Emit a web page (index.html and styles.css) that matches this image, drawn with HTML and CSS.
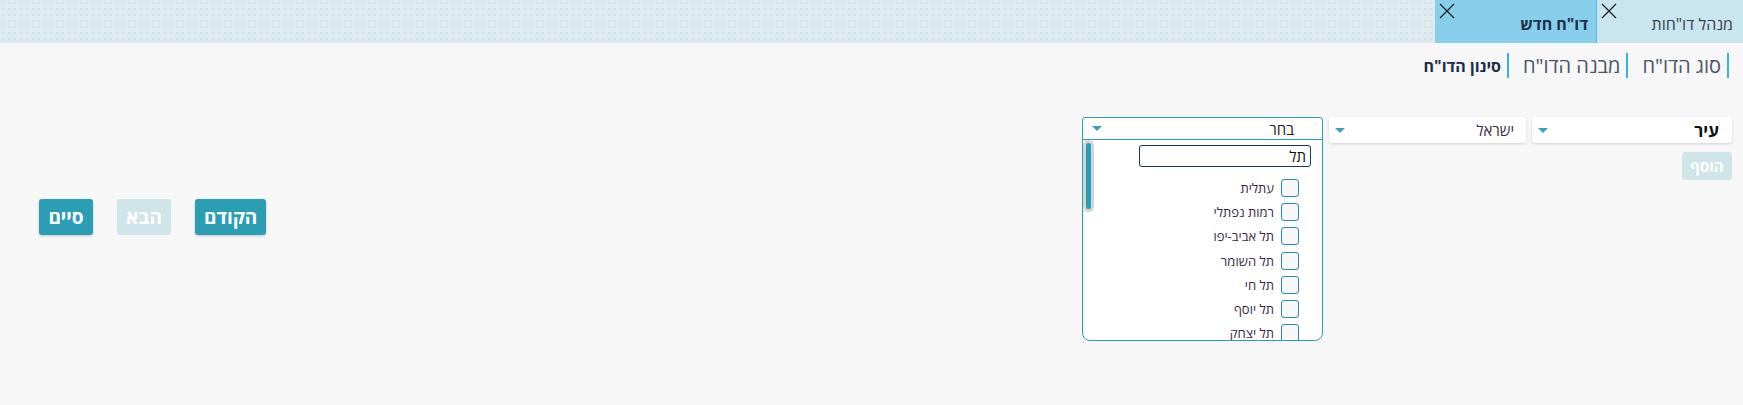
FILE: index.html
```html
<!DOCTYPE html>
<html lang="he" dir="rtl">
<head>
    <meta charset="UTF-8">
    <meta name="viewport" content="width=device-width, initial-scale=1.0">
    <title>דו"ח חדש</title>
    <link rel="stylesheet" href="styles.css">
</head>
<body>
    <div class="topbar">
        <div class="tab">
            <span class="tab-title">מנהל דו"חות</span>
            <span class="tab-close">
                <svg width="16" height="16" viewBox="0 0 16 16"><path d="M1 1L15 15M15 1L1 15" stroke="#222" stroke-width="1.3" fill="none"/></svg>
            </span>
        </div>
        <div class="tab active">
            <span class="tab-title">דו"ח חדש</span>
            <span class="tab-close">
                <svg width="16" height="16" viewBox="0 0 16 16"><path d="M1 1L15 15M15 1L1 15" stroke="#222" stroke-width="1.3" fill="none"/></svg>
            </span>
        </div>
    </div>

    <div class="steps">
        <span class="step">סוג הדו"ח</span>
        <span class="step">מבנה הדו"ח</span>
        <span class="step current">סינון הדו"ח</span>
    </div>

    <div class="content">
        <div class="filter">
            <div class="selects">
                <div class="select field">
                    <span>עיר</span>
                    <span class="arrow"></span>
                </div>
                <div class="select">
                    <span>ישראל</span>
                    <span class="arrow"></span>
                </div>
                <div class="select open">
                    <div class="dropdown">
                        <div class="dd-head">
                            <span>בחר</span>
                            <span class="arrow"></span>
                        </div>
                        <div class="dd-body">
                            <input class="dd-search" type="text" value="תל">
                            <ul class="dd-list">
                                <li><span class="check"></span><span>עתלית</span></li>
                                <li><span class="check"></span><span>רמות נפתלי</span></li>
                                <li><span class="check"></span><span>תל אביב-יפו</span></li>
                                <li><span class="check"></span><span>תל השומר</span></li>
                                <li><span class="check"></span><span>תל חי</span></li>
                                <li><span class="check"></span><span>תל יוסף</span></li>
                                <li><span class="check"></span><span>תל יצחק</span></li>
                            </ul>
                            <div class="scrollbar"><div class="thumb"></div></div>
                        </div>
                    </div>
                </div>
            </div>
            <div class="add-row">
                <button class="btn small disabled">הוסף</button>
            </div>
        </div>

        <div class="nav">
            <button class="btn">הקודם</button>
            <button class="btn disabled">הבא</button>
            <button class="btn">סיים</button>
        </div>
    </div>
</body>
</html>
```

FILE: styles.css
```css
html, body {
    min-height: 100vh;
}
body {
    margin: 0;
    background: #f7f7f7;
    font-family: "Open Sans", "Liberation Sans", sans-serif;
    color: #2b2b3a;
}
.topbar {
    display: flex;
    height: 43px;
    background-color: #deebee;
    background-image: radial-gradient(#cde1e5 1px, transparent 1.2px);
    background-size: 6px 6px;
}
.tab {
    display: flex;
    width: 146px;
    padding-right: 10px;
    box-sizing: border-box;
    background: #c8e5f0;
}
.tab.active {
    width: 162px;
    padding-right: 8px;
    background: #87ceeb;
    border-right: 1px solid #5ab4d6;
}
.tab-title {
    align-self: center;
    margin-top: 5px;
    font-size: 16px;
    color: #3a3f4a;
    white-space: nowrap;
}
.tab.active .tab-title {
    font-weight: bold;
    color: #1c2e4a;
}
.tab-close {
    margin-right: auto;
    padding: 2px 4px 0 0;
    width: 20px;
    height: 20px;
}
.steps {
    display: flex;
    margin-top: 10px;
    padding-right: 14px;
}
.step {
    display: flex;
    align-items: center;
    height: 25px;
    padding-right: 6px;
    margin-left: 14px;
    border-right: 2px solid #35b5dd;
    font-size: 20px;
    color: #4a5566;
    white-space: nowrap;
}
.step.current {
    font-size: 16px;
    font-weight: bold;
    color: #1c2e4a;
}
.content {
    padding: 39px 11px 0 39px;
}
.selects {
    display: flex;
    gap: 6px;
}
.select {
    display: flex;
    align-items: center;
    width: 197px;
    height: 26px;
    padding: 0 12px 0 6px;
    box-sizing: border-box;
    background: white;
    border-radius: 3px;
    box-shadow: 0 1px 3px rgba(0, 0, 0, 0.15);
    font-size: 15px;
    color: #3a2a4a;
}
.select.field {
    width: 200px;
    padding-right: 13px;
    font-size: 17px;
    font-weight: bold;
    color: #111;
}
.arrow {
    margin-right: auto;
    width: 0;
    height: 0;
    border-left: 5px solid transparent;
    border-right: 5px solid transparent;
    border-top: 5px solid #3a9fb8;
}
.select.open {
    position: relative;
    width: 241px;
    background: transparent;
    box-shadow: none;
    padding: 0;
}
.dropdown {
    position: absolute;
    top: 0;
    left: 0;
    right: 0;
    height: 224px;
    box-sizing: border-box;
    background: white;
    border: 1px solid #2a9db5;
    border-radius: 3px 3px 8px 8px;
    overflow: hidden;
    z-index: 5;
}
.dd-head {
    display: flex;
    align-items: center;
    height: 21px;
    padding: 0 28px 0 9px;
    border-bottom: 1px solid #2a9db5;
    font-size: 15px;
    color: #222;
}
.dd-body {
    position: relative;
    padding-top: 5px;
}
.dd-search {
    display: block;
    width: 172px;
    height: 22px;
    margin-right: 11px;
    padding: 0 4px;
    box-sizing: border-box;
    border: 1px solid #1d3557;
    border-radius: 3px;
    font-family: inherit;
    font-size: 15px;
    color: #111;
    outline: none;
}
.dd-list {
    list-style: none;
    margin: 9px 0 0;
    padding: 0 23px 0 0;
}
.dd-list li {
    display: flex;
    align-items: center;
    gap: 7px;
    height: 24.2px;
    font-size: 13px;
}
.check {
    width: 18px;
    height: 18px;
    box-sizing: border-box;
    border: 1.5px solid #2a88b0;
    border-radius: 3px;
    background: #f5f7f8;
}
.scrollbar {
    position: absolute;
    top: 0;
    left: 0;
    width: 11px;
    height: 72px;
    box-sizing: border-box;
    padding: 3px;
    background: #d4d4d4;
    border-radius: 6px;
}
.thumb {
    height: 100%;
    background: #2a9db5;
    border-radius: 3px;
}
.add-row {
    display: flex;
    margin-top: 9px;
}
.btn {
    height: 36px;
    min-width: 54px;
    padding: 0 9px;
    border: none;
    border-radius: 3px;
    background: #2c9eb3;
    box-shadow: 0 1px 3px rgba(0, 0, 0, 0.2);
    font-family: inherit;
    font-size: 19px;
    font-weight: bold;
    color: white;
}
.btn.disabled {
    background: #d0e5ea;
    box-shadow: none;
}
.btn.small {
    height: 28px;
    min-width: 50px;
    padding: 0 6px;
    font-size: 15px;
}
.nav {
    display: flex;
    justify-content: flex-end;
    gap: 24px;
    margin-top: 19px;
}
```
